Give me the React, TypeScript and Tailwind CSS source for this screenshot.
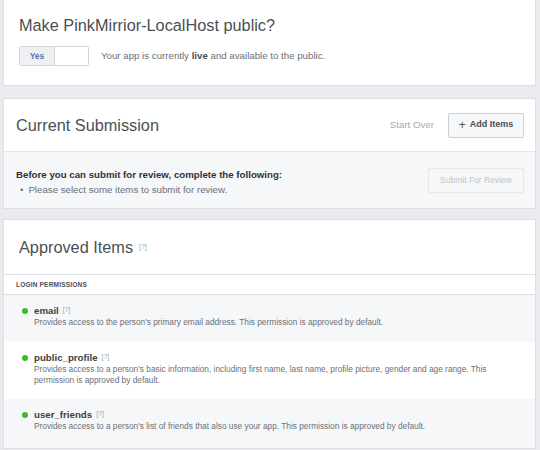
import React from "react";

const Help = ({ className = "" }: { className?: string }) => (
  <span className={`text-[7px] text-[#a0a4aa] ${className}`}>[?]</span>
);

const permissions = [
  {
    name: "email",
    desc: "Provides access to the person's primary email address. This permission is approved by default.",
    bg: "bg-[#f6f7f9]",
    h: "h-[47px]",
  },
  {
    name: "public_profile",
    desc: "Provides access to a person's basic information, including first name, last name, profile picture, gender and age range. This permission is approved by default.",
    bg: "bg-white",
    h: "h-[57px]",
  },
  {
    name: "user_friends",
    desc: "Provides access to a person's list of friends that also use your app. This permission is approved by default.",
    bg: "bg-[#f6f7f9]",
    h: "h-[49px]",
  },
];

const App = () => {
  return (
    <div className="min-h-[450px] bg-[#e9ebee] pl-[3px] pr-[4px] font-['Liberation_Sans',Arial,sans-serif] text-[#4b4f56]">
      {/* Public toggle */}
      <div className="h-[86px] bg-white border-x border-b border-[#dddfe2] pl-[15px] pt-[16px]">
        <h1 className="text-[16.3px] leading-[19px]">Make PinkMirrior-LocalHost public?</h1>
        <div className="mt-[11px] flex items-center">
          <div className="flex h-[20px] w-[70px] border border-[#d3d6db] rounded-[2px] overflow-hidden">
            <div className="w-[35px] bg-[#eef0f3] border-r border-[#d3d6db] flex items-center justify-center text-[8.5px] font-bold text-[#5b75b0]">
              Yes
            </div>
            <div className="flex-1 bg-white" />
          </div>
          <p className="ml-[12px] text-[9.7px] text-[#6b7078]">
            Your app is currently <b className="text-[#4b4f56]">live</b> and available to the public.
          </p>
        </div>
      </div>

      {/* Current submission */}
      <div className="mt-[12px] bg-white border border-[#dddfe2]">
        <div className="h-[52px] flex items-center pl-[12px] pr-[11px]">
          <h2 className="text-[16.3px] leading-[19px] flex-1">Current Submission</h2>
          <span className="text-[9.7px] text-[#a5a9af] mr-[14px]">Start Over</span>
          <button className="w-[76px] h-[25px] border border-[#ccd0d5] bg-[#f6f7f9] rounded-[2px] text-[9px] font-bold text-[#4b4f56] flex items-center justify-center gap-[4px]">
            <span className="text-[12px] font-normal leading-none">+</span>Add Items
          </button>
        </div>
        <div className="h-[57px] bg-[#f6f7f9] border-t border-[#e5e6e9] flex items-start pl-[12px] pr-[11px] pt-[15px]">
          <div className="flex-1">
            <p className="text-[9.7px] font-bold leading-[15px] text-[#2f3237]">
              Before you can submit for review, complete the following:
            </p>
            <p className="text-[9.7px] leading-[15px] text-[#6b7078] pl-[4px]">
              <span className="mr-[5px]">•</span>Please select some items to submit for review.
            </p>
          </div>
          <button className="mt-[1px] w-[96px] h-[25px] border border-[#e5e6e9] bg-[#f6f7f9] rounded-[2px] text-[8.5px] text-[#bec3c9]">
            Submit For Review
          </button>
        </div>
      </div>

      {/* Approved items */}
      <div className="mt-[10px] bg-white border border-[#dddfe2]">
        <div className="h-[54px] flex items-center pl-[15px]">
          <h2 className="text-[16.3px] leading-[19px]">Approved Items</h2>
          <Help className="ml-[6px]" />
        </div>
        <div className="h-[21px] border-y border-[#dddfe2] flex items-center pl-[12px] text-[6.5px] font-bold tracking-[0.2px] text-[#4b4f56]">
          LOGIN PERMISSIONS
        </div>
        {permissions.map((p) => (
          <div key={p.name} className={`${p.bg} ${p.h} pl-[18px] pr-[36px] pt-[9px]`}>
            <div className="flex items-center">
              <span className="w-[6px] h-[6px] rounded-full bg-[#42b72a] mr-[6px]" />
              <span className="text-[9.7px] leading-[13px] font-bold text-[#3b3f45]">{p.name}</span>
              <Help className="ml-[4px]" />
            </div>
            <p className="ml-[12px] text-[8.3px] leading-[11px] text-[#6b7078]">{p.desc}</p>
          </div>
        ))}
      </div>
    </div>
  );
};

export default App;
